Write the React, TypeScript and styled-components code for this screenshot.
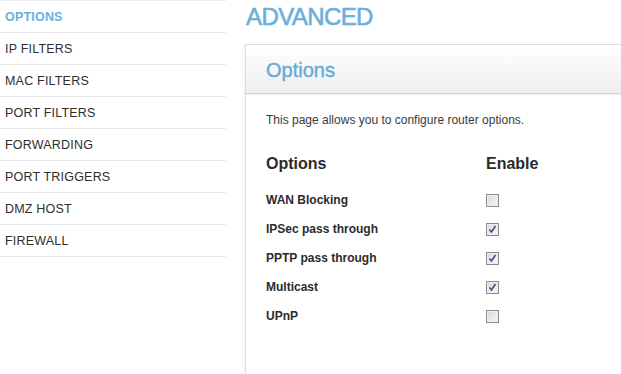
import React, {useState} from 'react';
import styled, {createGlobalStyle} from 'styled-components';

const GlobalStyle = createGlobalStyle`
  body {
    margin: 0;
    background: #fff;
    font-family: "Liberation Sans", Arial, sans-serif;
    overflow: hidden;
  }
`;

const Page = styled.div`
  display: flex;
  flex-direction: row;
  width: 621px;
  height: 374px;
  overflow: hidden;
`;

const Sidebar = styled.ul`
  list-style: none;
  margin: 0;
  padding: 0;
  width: 226px;
  flex-shrink: 0;
  border-top: 1px solid #ececec;
`;

const NavItem = styled.li<{active?: boolean}>`
  height: 31px;
  line-height: 32px;
  padding-left: 5px;
  border-bottom: 1px solid #e6e6e6;
  font-size: 12.5px;
  letter-spacing: 0.2px;
  color: ${p => p.active ? '#6ab0db' : '#2e2e2e'};
  font-weight: ${p => p.active ? 'bold' : 'normal'};
`;

const Main = styled.div`
  flex: 1;
  margin-left: 19px;
  min-width: 0;
`;

const Title = styled.h1`
  margin: 0;
  height: 44px;
  padding: 3px 0 0 1px;
  box-sizing: border-box;
  font-size: 24px;
  font-weight: normal;
  letter-spacing: -0.6px;
  color: #6ab0db;
  line-height: 28px;
  -webkit-text-stroke: 0.6px #6ab0db;
`;

const Panel = styled.div`
  border: 1px solid #dedede;
  border-right: none;
  min-height: 360px;
  box-shadow: -2px 0 3px rgba(0, 0, 0, 0.04);
`;

const PanelHeader = styled.div`
  height: 48px;
  line-height: 50px;
  padding-left: 20px;
  background: linear-gradient(#ffffff, #efefef);
  border-bottom: 1px solid #d2d2d2;
  box-shadow: 0 1px 1px rgba(0, 0, 0, 0.05);
  font-size: 20px;
  color: #64abd8;
  -webkit-text-stroke: 0.4px #64abd8;
`;

const PanelBody = styled.div`
  padding: 19px 20px 0 20px;
`;

const Intro = styled.p`
  margin: 0;
  font-size: 12px;
  line-height: 14px;
  color: #3a3a3a;
`;

const OptionGrid = styled.div`
  display: grid;
  grid-template-columns: 220px auto;
  grid-template-rows: 37px;
  grid-auto-rows: 29px;
  margin-top: 22px;
  color: #2b2b2b;
`;

const HeadCell = styled.div`
  font-size: 16px;
  font-weight: bold;
  line-height: 29px;
`;

const LabelCell = styled.div`
  font-size: 12px;
  font-weight: bold;
  line-height: 29px;
`;

const BoxCell = styled.div`
  display: flex;
  align-items: center;
`;

const Box = styled.span<{checked: boolean}>`
  position: relative;
  width: 11px;
  height: 11px;
  border: 1px solid #8a8b8c;
  background: linear-gradient(135deg, #d6d6d6, #f9f9f9);
  box-shadow: inset 0 0 0 1px #eeeeee;
  cursor: pointer;
  svg {
    position: absolute;
    left: 1px;
    top: 1px;
  }
`;

const options = [
  {name: 'WAN Blocking', on: false},
  {name: 'IPSec pass through', on: true},
  {name: 'PPTP pass through', on: true},
  {name: 'Multicast', on: true},
  {name: 'UPnP', on: false},
];

const nav = ['OPTIONS', 'IP FILTERS', 'MAC FILTERS', 'PORT FILTERS', 'FORWARDING', 'PORT TRIGGERS', 'DMZ HOST', 'FIREWALL'];

const Check: React.FC<{checked: boolean; onToggle: () => void}> = ({checked, onToggle}) => (
  <Box checked={checked} onClick={onToggle}>
    {checked && (
      <svg width="9" height="9" viewBox="0 0 9 9">
        <path d="M1.5 4.5 L3.5 7 L7.5 1" fill="none" stroke="#3d4f8a" strokeWidth="1.6" />
      </svg>
    )}
  </Box>
);

const App: React.FC = () => {
  const [state, setState] = useState(options.map(o => o.on));

  return (
    <Page>
      <GlobalStyle />
      <Sidebar>
        {nav.map((n, i) => (
          <NavItem key={n} active={i === 0}>{n}</NavItem>
        ))}
      </Sidebar>
      <Main>
        <Title>ADVANCED</Title>
        <Panel>
          <PanelHeader>Options</PanelHeader>
          <PanelBody>
            <Intro>This page allows you to configure router options.</Intro>
            <OptionGrid>
              <HeadCell>Options</HeadCell>
              <HeadCell>Enable</HeadCell>
              {options.map((o, i) => (
                <React.Fragment key={o.name}>
                  <LabelCell>{o.name}</LabelCell>
                  <BoxCell>
                    <Check checked={state[i]} onToggle={() => {
                      setState(s => s.map((v, j) => j === i ? !v : v));
                    }} />
                  </BoxCell>
                </React.Fragment>
              ))}
            </OptionGrid>
          </PanelBody>
        </Panel>
      </Main>
    </Page>
  );
}

export default App;
